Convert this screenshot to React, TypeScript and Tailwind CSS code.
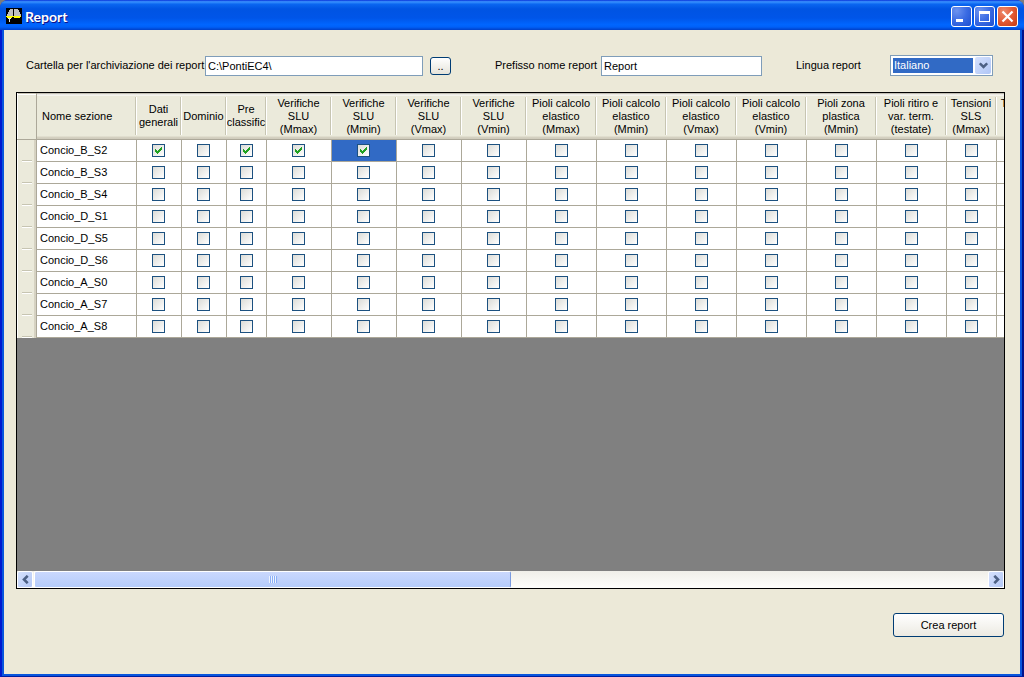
import { useState } from "react";
import type { ReactNode } from "react";

type Column = {
  lines: string[];
  width: string;
};

const columns: Column[] = [
  { lines: ["Dati", "generali"], width: "w-[45px]" },
  { lines: ["Dominio"], width: "w-[45px]" },
  { lines: ["Pre", "classific"], width: "w-[40px]" },
  { lines: ["Verifiche", "SLU", "(Mmax)"], width: "w-[65px]" },
  { lines: ["Verifiche", "SLU", "(Mmin)"], width: "w-[65px]" },
  { lines: ["Verifiche", "SLU", "(Vmax)"], width: "w-[65px]" },
  { lines: ["Verifiche", "SLU", "(Vmin)"], width: "w-[65px]" },
  { lines: ["Pioli calcolo", "elastico", "(Mmax)"], width: "w-[70px]" },
  { lines: ["Pioli calcolo", "elastico", "(Mmin)"], width: "w-[70px]" },
  { lines: ["Pioli calcolo", "elastico", "(Vmax)"], width: "w-[70px]" },
  { lines: ["Pioli calcolo", "elastico", "(Vmin)"], width: "w-[70px]" },
  { lines: ["Pioli zona", "plastica", "(Mmin)"], width: "w-[70px]" },
  { lines: ["Pioli ritiro e", "var. term.", "(testate)"], width: "w-[70px]" },
  { lines: ["Tensioni", "SLS", "(Mmax)"], width: "w-[50px]" },
  { lines: ["Tensioni", "SLS", "(Mmin)"], width: "w-[50px]" },
];

const sections = [
  "Concio_B_S2",
  "Concio_B_S3",
  "Concio_B_S4",
  "Concio_D_S1",
  "Concio_D_S5",
  "Concio_D_S6",
  "Concio_A_S0",
  "Concio_A_S7",
  "Concio_A_S8",
];

const BridgeIcon = () => (
  <svg viewBox="0 0 16 16" className="w-4 h-4" shapeRendering="crispEdges" aria-hidden="true">
    <path fill="#000" d="M0 0h16v16H0z" />
    <path fill="#c0c0c0" d="M4 1h3v7H1V6h1V4h1V2h1zM8 1h4v1h1v2h1v2h1v2H8z" />
    <path fill="#ff0" d="M0 8h15v1H0zM1 9h5v1H1zM8 9h6v1H8z" />
    <path fill="#e8e8e8" d="M2 10h3v1H4v3H3v-3H2z" />
  </svg>
);

const Chevron = ({ className }: { className: string }) => (
  <svg viewBox="0 0 9 9" className={className} aria-hidden="true">
    <path d="M0.8 2.3 4.5 6 8.2 2.3" fill="none" stroke="#4d6185" strokeWidth="2.6" />
  </svg>
);

const CaptionButton = ({
  label,
  danger = false,
  children,
}: {
  label: string;
  danger?: boolean;
  children: ReactNode;
}) => (
  <button
    aria-label={label}
    className={`w-[21px] h-[21px] rounded-[3px] border border-white flex items-center justify-center ${
      danger
        ? "bg-radial-[at_30%_25%] from-[#ee8a6c] via-[#e25a35] to-[#c43a12]"
        : "bg-radial-[at_25%_20%] from-[#6d93ef] via-[#3a6be3] to-[#1e4fd0]"
    }`}
  >
    {children}
  </button>
);

const CheckBox = ({ label, initial }: { label: string; initial: boolean }) => {
  const [checked, setChecked] = useState(initial);

  return (
    <span className="grid w-[13px] h-[13px] mx-auto">
      <input
        type="checkbox"
        aria-label={label}
        checked={checked}
        onChange={() => setChecked(!checked)}
        className="col-start-1 row-start-1 appearance-none w-[13px] h-[13px] border border-[#1c5180] bg-linear-to-br from-[#dcdcd7] to-white"
      />
      {checked && (
        <svg
          viewBox="0 0 13 13"
          className="col-start-1 row-start-1 w-[13px] h-[13px] pointer-events-none"
          shapeRendering="crispEdges"
        >
          <path
            fill="#21a121"
            d="M3 5h1v3H3zM4 6h1v3H4zM5 7h1v3H5zM6 6h1v3H6zM7 5h1v3H7zM8 4h1v3H8zM9 3h1v3H9z"
          />
        </svg>
      )}
    </span>
  );
};

const TitleBar = () => (
  <header className="h-[30px] shrink-0 pl-1.5 pr-1.5 pt-0.5 flex items-center justify-between bg-[linear-gradient(180deg,#0831d9_0%,#3a93ff_6%,#0a66f0_14%,#0054e3_30%,#0055e8_60%,#0066ff_82%,#0060f8_90%,#0040c8_100%)]">
    <div className="flex items-center gap-[3px]">
      <BridgeIcon />
      <h1 className="pt-px font-[Lato,sans-serif] text-[14px] leading-4 font-bold text-white [text-shadow:1px_1px_#0f1089]">
        Report
      </h1>
    </div>
    <div className="flex gap-0.5">
      <CaptionButton label="Riduci a icona">
        <svg viewBox="0 0 19 19" className="w-[19px] h-[19px]" shapeRendering="crispEdges">
          <path fill="#fff" d="M4 12h7v3H4z" />
        </svg>
      </CaptionButton>
      <CaptionButton label="Ingrandisci">
        <svg viewBox="0 0 19 19" className="w-[19px] h-[19px]" shapeRendering="crispEdges">
          <path fill="#fff" fillRule="evenodd" d="M4 4h11v11H4zM5 7v7h9V7z" />
        </svg>
      </CaptionButton>
      <CaptionButton label="Chiudi" danger>
        <svg viewBox="0 0 19 19" className="w-[19px] h-[19px]">
          <path stroke="#fff" strokeWidth="2.2" d="m4.5 4.5 10 10m0-10-10 10" />
        </svg>
      </CaptionButton>
    </div>
  </header>
);

const ReportOptions = () => (
  <div className="flex items-center pl-2.5 pr-3">
    <div className="flex items-center">
      <label htmlFor="folder" className="w-[179px] whitespace-nowrap">
        Cartella per l'archiviazione dei report
      </label>
      <input
        id="folder"
        defaultValue="C:\PontiEC4\"
        className="w-[218px] h-5 px-0.5 border border-[#7f9db9] bg-white"
      />
      <button
        aria-label="Sfoglia"
        className="ml-[7px] w-[21px] h-[18px] rounded-[3px] border border-[#003c74] bg-linear-to-b from-white to-[#e6e4da] leading-4"
      >
        ..
      </button>
    </div>
    <div className="ml-11 flex items-center">
      <label htmlFor="prefix" className="w-[106px]">
        Prefisso nome report
      </label>
      <input
        id="prefix"
        defaultValue="Report"
        className="w-[161px] h-5 px-0.5 border border-[#7f9db9] bg-white"
      />
    </div>
    <div className="ml-auto flex items-center">
      <label htmlFor="language" className="w-[94px]">
        Lingua report
      </label>
      <div className="grid w-[103px] h-[21px] p-px border border-[#7f9db9] bg-white items-center">
        <select
          id="language"
          className="col-start-1 row-start-1 appearance-none w-20 h-[15px] ml-px pl-px bg-[#316ac5] text-white leading-[15px]"
        >
          <option>Italiano</option>
          <option>English</option>
        </select>
        <span className="col-start-1 row-start-1 justify-self-end w-4 h-[17px] rounded-xs bg-linear-to-br from-[#d5e1fd] to-[#b0c6f6] flex items-center justify-center pointer-events-none">
          <Chevron className="w-[9px] h-[9px]" />
        </span>
      </div>
    </div>
  </div>
);

const SectionTable = () => {
  const initialChecks = [0, 2, 3, 4];

  return (
    <table className="table-fixed w-[1080px] border-separate border-spacing-0">
      <thead>
        <tr className="h-[47px] bg-[linear-gradient(180deg,#aca899_0,#fff_2px,#ebeadb_3px,#ebeadb_43px,#d6d2c2_44px,#cbc7b8_100%)]">
          <td className="w-5 p-0 border-r border-b border-[#aca899] bg-[#ebeadb] shadow-[inset_1px_0_#fff,inset_0_1px_#c9c5b5,inset_0_2px_#fff]" />
          <th className="w-[100px] p-0 border-b border-[#aca899] font-normal text-left">
            <div className="h-[38px] pl-[5px] flex items-center border-r border-white shadow-[inset_-1px_0_#c7c5b2]">
              Nome sezione
            </div>
          </th>
          {columns.map((column, i) => (
            <th key={i} className={`${column.width} p-0 border-b border-[#aca899] font-normal`}>
              <div className="h-[38px] pr-px flex flex-col items-center justify-center overflow-hidden whitespace-nowrap leading-[13px] border-r border-white shadow-[inset_-1px_0_#c7c5b2]">
                {column.lines.map((line) => (
                  <span key={line}>{line}</span>
                ))}
              </div>
            </th>
          ))}
          <th className="p-0 border-b border-[#aca899]" />
        </tr>
      </thead>
      <tbody>
        {sections.map((section, row) => (
          <tr key={section} className="h-[22px] bg-white">
            <td className="p-0 border-r border-[#aca899] bg-[#ebeadb] shadow-[inset_1px_0_#fff,inset_-2px_0_#d6d2c2]">
              <div className="h-[22px] ml-[5px] mr-1 flex flex-col justify-end">
                <div className="h-0.5 border-t border-b border-t-[#c7c5b2] border-b-white" />
              </div>
            </td>
            <td className="p-0 pl-[3px] border-r border-b border-[#aca899]">{section}</td>
            {columns.map((column, col) => (
              <td
                key={col}
                className={`p-0 pr-px border-r border-b border-[#aca899] ${
                  row === 0 && col === 4 ? "bg-[#316ac5]" : ""
                }`}
              >
                <CheckBox
                  label={`${section} ${column.lines.join(" ")}`}
                  initial={row === 0 && initialChecks.includes(col)}
                />
              </td>
            ))}
            <td className="p-0 border-b border-[#aca899]" />
          </tr>
        ))}
      </tbody>
    </table>
  );
};

const ScrollBar = () => (
  <div className="h-[17px] shrink-0 flex items-center bg-linear-to-b from-[#f0efe9] to-[#fefefb]">
    <button
      aria-label="Scorri a sinistra"
      className="w-4 h-[17px] rounded-xs border border-white bg-linear-to-br from-[#d5e1fd] to-[#b4c8f6] flex items-center justify-center"
    >
      <Chevron className="w-[9px] h-[9px] rotate-90" />
    </button>
    <div className="flex-1 h-full pl-px">
      <div className="w-1/2 h-full rounded-xs border border-white border-r-[#7a9be0] bg-linear-to-b from-[#cad8fd] to-[#b5ccfb] flex items-center justify-center">
        <div className="w-2 h-[7px] bg-[repeating-linear-gradient(90deg,#eef4fe_0_1px,#8cb0f8_1px_2px)]" />
      </div>
    </div>
    <button
      aria-label="Scorri a destra"
      className="w-4 h-[17px] rounded-xs border border-white bg-linear-to-br from-[#d5e1fd] to-[#b4c8f6] flex items-center justify-center"
    >
      <Chevron className="w-[9px] h-[9px] -rotate-90" />
    </button>
  </div>
);

export default function App() {
  return (
    <div className="h-screen bg-[#7c7c7c]">
      <div className="h-full flex flex-col overflow-hidden rounded-t-lg bg-[#0831d9] font-['Liberation_Sans',Arial,sans-serif] text-[11px] leading-[13px] text-black">
        <TitleBar />
        <div className="flex-1 min-h-0 flex border-l-2 border-r-2 border-b border-l-[#0019cf] border-r-[#00138c] border-b-[#001ea0] bg-[#0855dd] px-0.5 pb-0.5">
          <main className="flex-1 min-w-0 flex flex-col bg-[#ece9d8] pl-3 pt-[25px] pb-[37px] pr-[15px]">
            <ReportOptions />
            <div className="mt-4 flex-1 min-h-0 flex flex-col border border-black bg-[#808080]">
              <div className="flex-1 min-h-0 overflow-hidden">
                <SectionTable />
              </div>
              <ScrollBar />
            </div>
            <div className="mt-6 pr-px flex justify-end">
              <button className="w-[111px] h-6 rounded-[3px] border border-[#003c74] bg-linear-to-b from-white to-[#eceae2]">
                Crea report
              </button>
            </div>
          </main>
        </div>
      </div>
    </div>
  );
}
